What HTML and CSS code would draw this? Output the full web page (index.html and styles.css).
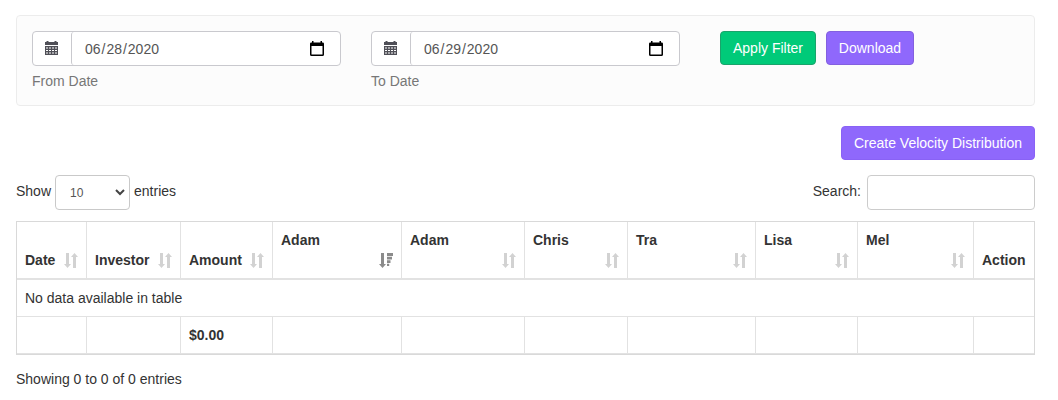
FILE: index.html
```html
<!DOCTYPE html>
<html lang="en">
<head>
<meta charset="utf-8">
<title>Velocity Distribution</title>
<link rel="stylesheet" href="styles.css">
</head>
<body>
<svg class="defs" width="0" height="0" aria-hidden="true">
  <symbol id="sort" viewBox="0 0 14 15"><path d="M2 0h3v11h2L3.500 15 0 11h2zM9 15V4H7l3.500-4L14 4h-2v11z"/></symbol>
  <symbol id="sort-desc" viewBox="0 0 14 15"><path d="M2 0h3v11h2L3.500 15 0 11h2zM8 0h6v3H8zM8 3.800h5v2.700H8zM8 7.300h3.500v2.700H8zM8 10.800h2.200v2.200H8z"/></symbol>
  <symbol id="calendar" viewBox="0 0 13 14"><path fill-rule="evenodd" d="M0 1h1.500V0h2v1h6V0h2v1H13v3H0zM0 5h13v9H0zM1 6.600v.9h2v-.9zM4 6.600v.9h2v-.9zM7 6.600v.9h2v-.9zM10 6.600v.9h2v-.9zM1 9v.9h2V9zM4 9v.9h2V9zM7 9v.9h2V9zM10 9v.9h2V9zM1 11.500v.9h2v-.9zM4 11.500v.9h2v-.9zM7 11.500v.9h2v-.9zM10 11.500v.9h2v-.9z"/></symbol>
  <symbol id="picker" viewBox="0 0 14 15"><path fill-rule="evenodd" d="M2 0h1.500v1.500h7V0H12v1.500h.7q1.300 0 1.300 1.300v10.700q0 1.500-1.500 1.500h-11Q0 15 0 13.500V2.800q0-1.300 1.300-1.300H2zM1.500 5v8.500h11V5z"/></symbol>
</svg>
<main class="page">
  <section class="filters">
    <div class="field">
      <div class="date-group">
        <span class="addon"><svg class="calendar"><use href="#calendar"/></svg></span>
        <div class="date"><span class="date-text">06<i>/</i>28<i>/</i>2020</span><svg class="picker"><use href="#picker"/></svg></div>
      </div>
      <div class="hint">From Date</div>
    </div>
    <div class="field">
      <div class="date-group">
        <span class="addon"><svg class="calendar"><use href="#calendar"/></svg></span>
        <div class="date"><span class="date-text">06<i>/</i>29<i>/</i>2020</span><svg class="picker"><use href="#picker"/></svg></div>
      </div>
      <div class="hint">To Date</div>
    </div>
    <div class="buttons">
      <button class="btn apply">Apply Filter</button>
      <button class="btn download">Download</button>
    </div>
  </section>
  <div class="actions"><button class="btn create">Create Velocity Distribution</button></div>
  <div class="controls">
    <div class="length">Show <div class="select"><span>10</span><svg class="chevron" viewBox="0 0 10 7"><path d="M1 1l4 4 4-4"/></svg></div> entries</div>
    <label class="search">Search: <input class="search-input" type="text"></label>
  </div>
  <table class="grid">
    <colgroup><col class="c-date"><col class="c-investor"><col class="c-amount"><col class="c-adam"><col class="c-adam2"><col class="c-chris"><col class="c-tra"><col class="c-lisa"><col class="c-mel"><col class="c-action"></colgroup>
    <thead>
      <tr>
        <th><div class="head low"><span>Date</span><svg class="sort"><use href="#sort"/></svg></div></th>
        <th><div class="head low"><span>Investor</span><svg class="sort"><use href="#sort"/></svg></div></th>
        <th><div class="head low"><span>Amount</span><svg class="sort"><use href="#sort"/></svg></div></th>
        <th><div class="head"><span>Adam</span><svg class="sort active"><use href="#sort-desc"/></svg></div></th>
        <th><div class="head"><span>Adam</span><svg class="sort"><use href="#sort"/></svg></div></th>
        <th><div class="head"><span>Chris</span><svg class="sort"><use href="#sort"/></svg></div></th>
        <th><div class="head"><span>Tra</span><svg class="sort"><use href="#sort"/></svg></div></th>
        <th><div class="head"><span>Lisa</span><svg class="sort"><use href="#sort"/></svg></div></th>
        <th><div class="head"><span>Mel</span><svg class="sort"><use href="#sort"/></svg></div></th>
        <th><div class="head low"><span>Action</span></div></th>
      </tr>
    </thead>
    <tbody><tr><td colspan="10">No data available in table</td></tr></tbody>
    <tfoot><tr><th></th><th></th><th>$0.00</th><th></th><th></th><th></th><th></th><th></th><th></th><th></th></tr></tfoot>
  </table>
  <div class="info">Showing 0 to 0 of 0 entries</div>
</main>
</body>
</html>
```
FILE: styles.css
```css
* { box-sizing: border-box; }
body { margin: 0; background: #fff; color: #333; font: 14px/20px "Liberation Sans", Arial, sans-serif; }
svg { display: block; flex: none; fill: currentColor; }
.defs { position: absolute; }
.page { width: 1019px; margin-left: 16px; padding-top: 15px; }
.filters { display: flex; height: 91px; padding: 15px; background: #fcfcfc; border: 1px solid #ececec; border-radius: 4px; }
.field { width: 309px; margin-right: 30px; }
.date-group { display: flex; height: 35px; background: #fff; border: 1px solid #c9c9ce; border-radius: 4px; }
.addon { width: 38px; padding: 9px 0 0 12px; color: #4f4f57; }
.calendar { width: 13px; height: 14px; }
.date { display: flex; flex: 1; justify-content: space-between; padding: 7px 16px 0 13px; border-left: 1px solid #c9c9ce; border-radius: 3px; color: #555; }
.date-text i { font-style: normal; padding: 0 1px; }
.date-text { letter-spacing: -.02px; }
.picker { width: 14px; height: 15px; margin-top: 2px; color: #000; }
.hint { margin-top: 5px; color: #777; }
.buttons { display: flex; gap: 10px; margin-left: 10px; }
.btn { height: 34px; padding: 0; border: 1px solid; border-radius: 4px; color: #fff; font: inherit; white-space: nowrap; }
.apply { width: 96px; background: #00ca79; border-color: #1aa36b; }
.download { width: 88px; background: #8f68fc; border-color: #8360df; }
.create { width: 194px; background: #8f68fc; border-color: #8962f5; }
.actions { display: flex; justify-content: flex-end; margin-top: 20px; }
.controls { display: flex; justify-content: space-between; height: 35px; margin-top: 15px; }
.length { display: flex; gap: 4px; line-height: 32px; }
.select { display: flex; justify-content: space-between; width: 75px; height: 35px; padding: 0 4px 0 14px; border: 1px solid #c9c9c9; border-radius: 4px; color: #555; font-size: 12px; line-height: 34px; }
.chevron { width: 10px; height: 7px; margin-top: 13px; fill: none; stroke: #444; stroke-width: 2; }
.search { display: flex; gap: 6px; line-height: 32px; }
.search-input { width: 168px; height: 35px; border: 1px solid #ccc; border-radius: 4px; background: #fff; }
.grid { width: 1019px; margin-top: 11px; table-layout: fixed; border: 1px solid #d9d9d9; border-collapse: separate; border-spacing: 0; }
.grid th, .grid td { height: 37px; padding: 8px; border-right: 1px solid #e2e2e2; border-bottom: 1px solid #e2e2e2; text-align: left; vertical-align: top; }
.grid th:last-child, .grid td:last-child { border-right: 0; }
.grid thead th { height: 58px; border-bottom-width: 2px; }
.head { display: flex; justify-content: space-between; height: 40px; }
.low { align-items: flex-end; }
.sort { align-self: flex-end; width: 14px; height: 15px; margin: 0 0 2px -10px; color: #d2d2d2; }
.active { color: #8b8b8b; }
.c-date { width: 70px; }
.c-investor { width: 94px; }
.c-amount { width: 92px; }
.c-adam { width: 129px; }
.c-adam2 { width: 123px; }
.c-chris { width: 103px; }
.c-tra { width: 128px; }
.c-lisa { width: 102px; }
.c-mel { width: 116px; }
.c-action { width: 60px; }
.info { margin-top: 14px; }
```
